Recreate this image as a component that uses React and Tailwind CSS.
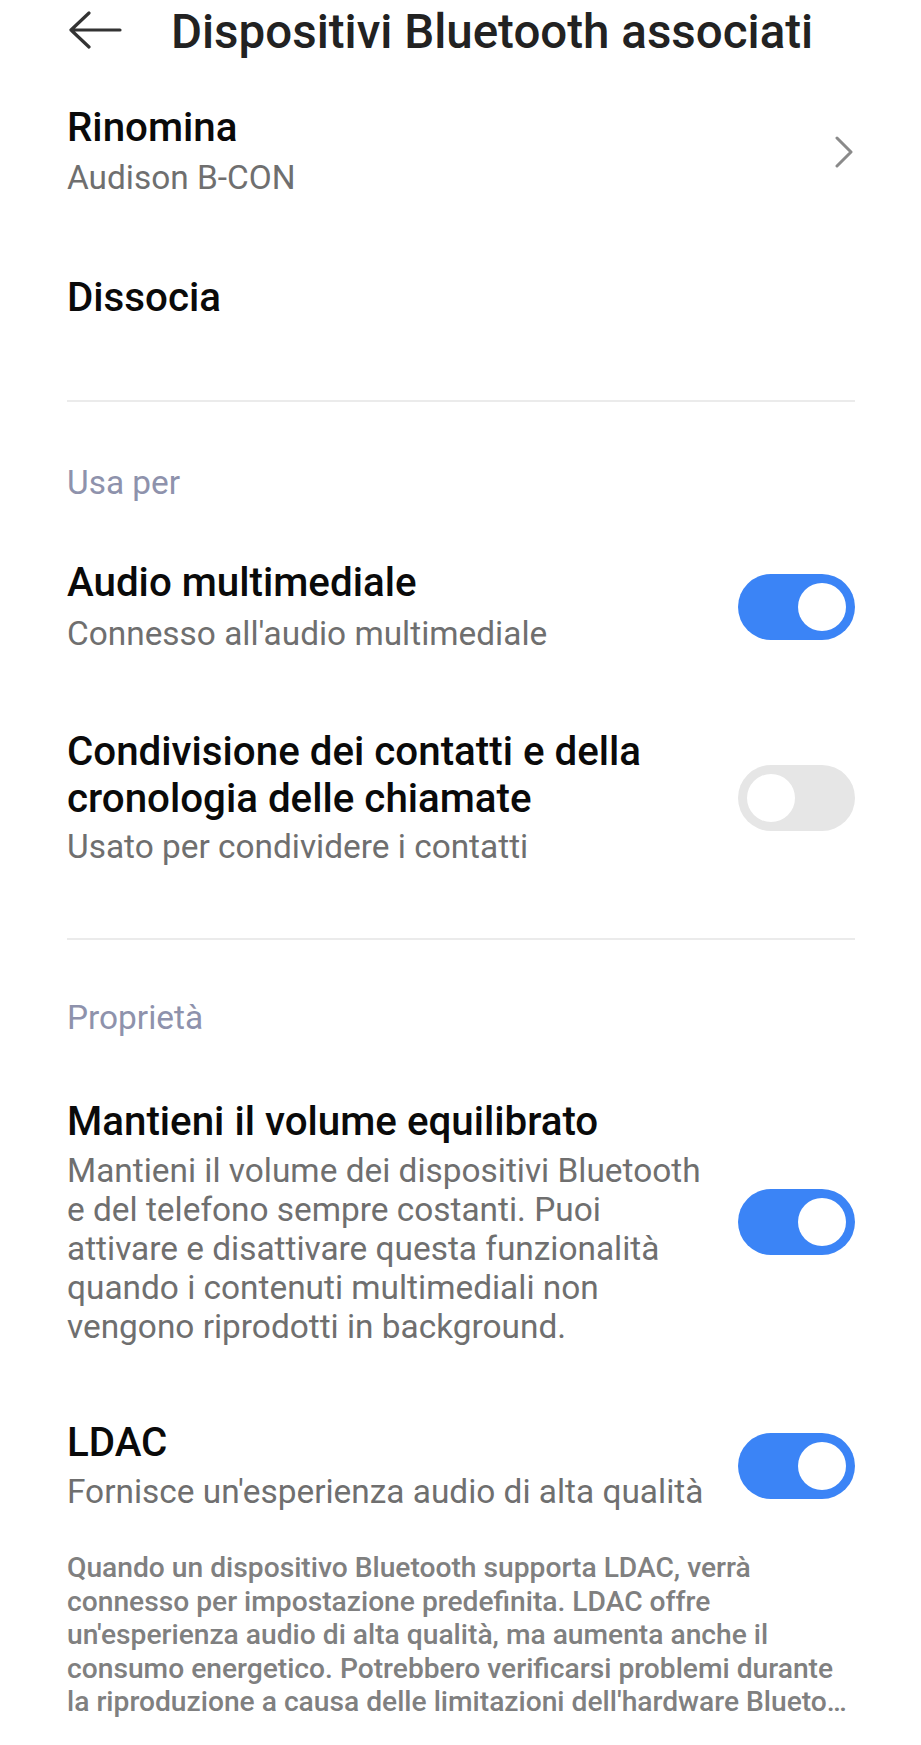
import React from 'react';

const Toggle = ({ on }) => (
  <div
    className={`w-[117px] h-[66px] shrink-0 rounded-full flex items-center px-[9px] ${
      on ? 'bg-[#3b84f6] justify-end' : 'bg-[#e6e6e6] justify-start'
    }`}
  >
    <div className="w-[48px] h-[48px] rounded-full bg-white" />
  </div>
);

const Title = ({ children }) => (
  <div className="text-[40.3px] leading-[48px] font-medium text-[#0a0a0a] whitespace-nowrap">{children}</div>
);

const Sub = ({ children, className = '' }) => (
  <div className={`text-[33.4px] leading-[42px] text-[#6f6f6f] whitespace-nowrap ${className}`}>{children}</div>
);

const SectionLabel = ({ children, className = '' }) => (
  <div className={`text-[33.4px] leading-[42px] text-[#8e92ac] ${className}`}>{children}</div>
);

const Divider = ({ className = '' }) => <div className={`h-[2px] bg-[#ebebeb] ${className}`} />;

const App = () => {
  return (
    <div className="min-h-screen bg-white font-[Roboto,sans-serif]">
      {/* header */}
      <div className="h-[64px] flex items-center pl-[69px]">
        <svg width="53" height="38" viewBox="0 0 53 38" className="mb-[4px] shrink-0" fill="none">
          <path d="M2 19H51M20 2L2 19L20 36" stroke="#333" strokeWidth="3.2" strokeLinecap="round" strokeLinejoin="round" />
        </svg>
        <div className="ml-[49px] text-[47.5px] leading-[56px] font-medium text-[#222] whitespace-nowrap">
          Dispositivi Bluetooth associati
        </div>
      </div>

      <div className="pl-[67px] pr-[66px]">
        {/* Rinomina */}
        <div className="mt-[40px] flex items-center justify-between">
          <div>
            <Title>Rinomina</Title>
            <Sub className="mt-[5px]">Audison B-CON</Sub>
          </div>
          <svg width="20" height="32" viewBox="0 0 20 32" fill="none" className="mr-[1px]">
            <path d="M3 2L17 16L3 30" stroke="#8a8a8a" strokeWidth="3" strokeLinecap="round" strokeLinejoin="round" />
          </svg>
        </div>

        <div className="mt-[75px]">
          <Title>Dissocia</Title>
        </div>

        <Divider className="mt-[78px]" />

        <SectionLabel className="mt-[60px]">Usa per</SectionLabel>

        {/* Audio multimediale */}
        <div className="mt-[55px] flex items-center justify-between">
          <div>
            <Title>Audio multimediale</Title>
            <Sub className="mt-[6px]">Connesso all'audio multimediale</Sub>
          </div>
          <Toggle on />
        </div>

        {/* Condivisione contatti */}
        <div className="mt-[73px] flex items-center justify-between">
          <div>
            <div className="text-[40.3px] leading-[47px] font-medium text-[#0a0a0a] whitespace-nowrap">
              Condivisione dei contatti e della
              <br />
              cronologia delle chiamate
            </div>
            <Sub className="mt-[4px]">Usato per condividere i contatti</Sub>
          </div>
          <Toggle on={false} />
        </div>

        <Divider className="mt-[70px]" />

        <SectionLabel className="mt-[57px]">Proprietà</SectionLabel>

        {/* Volume equilibrato */}
        <div className="mt-[59px] flex items-center justify-between">
          <div>
            <Title>Mantieni il volume equilibrato</Title>
            <div className="mt-[5px] text-[33.4px] leading-[39px] text-[#6f6f6f] whitespace-nowrap">
              Mantieni il volume dei dispositivi Bluetooth
              <br />
              e del telefono sempre costanti. Puoi
              <br />
              attivare e disattivare questa funzionalità
              <br />
              quando i contenuti multimediali non
              <br />
              vengono riprodotti in background.
            </div>
          </div>
          <Toggle on />
        </div>

        {/* LDAC */}
        <div className="mt-[73px] flex items-center justify-between">
          <div>
            <Title>LDAC</Title>
            <Sub className="mt-[4px]">Fornisce un'esperienza audio di alta qualità</Sub>
          </div>
          <Toggle on />
        </div>

        <div className="mt-[38px] pb-[30px] text-[28.2px] leading-[33.6px] font-medium text-[#808080] whitespace-nowrap">
          Quando un dispositivo Bluetooth supporta LDAC, verrà
          <br />
          connesso per impostazione predefinita. LDAC offre
          <br />
          un'esperienza audio di alta qualità, ma aumenta anche il
          <br />
          consumo energetico. Potrebbero verificarsi problemi durante
          <br />
          la riproduzione a causa delle limitazioni dell'hardware Blueto…
        </div>
      </div>
    </div>
  );
};

export default App;
